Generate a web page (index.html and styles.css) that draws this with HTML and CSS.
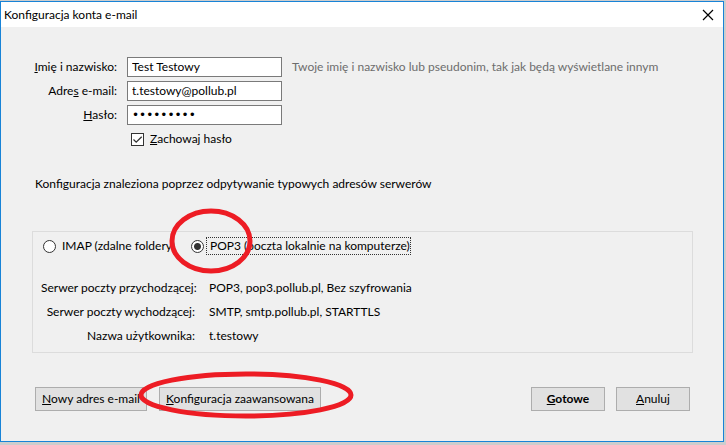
FILE: index.html
```
<!DOCTYPE html>
<html lang="pl">
  <head>
    <meta charset="utf-8">
    <title>Konfiguracja konta e-mail</title>
    <link rel="stylesheet" href="styles.css">
  </head>

  <body>
    <div class="window">
      <header class="titlebar">
        <h1>Konfiguracja konta e-mail</h1>
        <button type="button" class="close" aria-label="Zamknij">
          <svg width="12" height="12" viewBox="0 0 12 12">
            <path d="M1 1L11 11M11 1L1 11" fill="none" stroke="#000" stroke-width="1.2" />
          </svg>
        </button>
      </header>

      <form class="content">
        <div class="account">
          <label for="name"><u>I</u>mię i nazwisko:</label>
          <input type="text" id="name" value="Test Testowy">
          <span class="hint">Twoje imię i nazwisko lub pseudonim, tak jak będą wyświetlane innym</span>

          <label for="email">Adre<u>s</u> e-mail:</label>
          <input type="text" id="email" value="t.testowy@pollub.pl">

          <label for="password"><u>H</u>asło:</label>
          <input type="password" id="password" value="testowy12">

          <div class="remember">
            <input type="checkbox" id="remember" checked>
            <label for="remember"><u>Z</u>achowaj hasło</label>
          </div>
        </div>

        <p class="status">Konfiguracja znaleziona poprzez odpytywanie typowych adresów serwerów</p>

        <section class="result">
          <div class="protocols">
            <div class="option">
              <input type="radio" name="protocol" id="imap">
              <label for="imap">IMAP (zdalne foldery)</label>
            </div>
            <div class="option">
              <input type="radio" name="protocol" id="pop3" checked>
              <label for="pop3" class="focused">POP3 (poczta lokalnie na komputerze)</label>
              <svg class="mark mark-option" width="86" height="68" viewBox="0 0 86 68">
                <ellipse cx="43" cy="34" rx="39" ry="30" />
              </svg>
            </div>
          </div>

          <dl class="servers">
            <dt>Serwer poczty przychodzącej:</dt>
            <dd>POP3, pop3.pollub.pl, Bez szyfrowania</dd>
            <dt>Serwer poczty wychodzącej:</dt>
            <dd>SMTP, smtp.pollub.pl, STARTTLS</dd>
            <dt>Nazwa użytkownika:</dt>
            <dd>t.testowy</dd>
          </dl>
        </section>

        <footer class="actions">
          <button type="button" class="wide"><u>N</u>owy adres e-mail</button>
          <div class="advanced">
            <button type="button" class="wider"><u>K</u>onfiguracja zaawansowana</button>
            <svg class="mark mark-button" width="216" height="48" viewBox="0 0 216 48">
              <ellipse cx="108" cy="24" rx="105" ry="21" />
            </svg>
          </div>
          <div class="confirm">
            <button type="button" class="default"><u>G</u>otowe</button>
            <button type="button"><u>A</u>nuluj</button>
          </div>
        </footer>
      </form>
    </div>
  </body>
</html>
```
FILE: styles.css
```
* {
  box-sizing: border-box;
  margin: 0;
  padding: 0;
}

body {
  background-color: #cdcdcd;
  color: #000;
  font-family: Lato, "Open Sans", sans-serif;
  font-size: 12px;
  line-height: 20px;
  padding: 1px 2px 2px 0;
}

input,
button {
  font: inherit;
  color: inherit;
}

.window {
  background-color: #f0f0f0;
  border: 1px solid #1883d7;
}

/* title bar */
.titlebar {
  align-items: center;
  background-color: #fff;
  display: flex;
  height: 25px;
  justify-content: space-between;
  padding: 0 9px 0 3px;
}

h1 {
  font-size: 12px;
  font-weight: normal;
}

.close {
  background: none;
  border: 0;
  display: flex;
}

.content {
  padding: 30px 30px 30px 31px;
}

/* account fields */
.account {
  display: grid;
  gap: 4px 10px;
  grid-template-columns: 85px 155px 1fr;
  white-space: nowrap;
}

.account > label {
  grid-column: 1;
  text-align: right;
}

.account > input {
  background-color: #fff;
  border: 1px solid #7a7a7a;
  height: 20px;
  padding: 0 4px;
  width: 100%;
}

.account > input[type="password"] {
  font-family: "DejaVu Sans", sans-serif;
}

.hint {
  color: #6d6d6d;
}

.remember,
.option {
  align-items: center;
  display: flex;
  gap: 6px;
}

.remember {
  grid-column: 2;
  padding-left: 4px;
}

input[type="checkbox"],
input[type="radio"] {
  appearance: none;
  background-color: #fff;
  border: 1px solid #333;
  height: 13px;
  width: 13px;
}

input[type="checkbox"]:checked {
  background-image: url("data:image/svg+xml,%3Csvg xmlns='http://www.w3.org/2000/svg' viewBox='0 0 11 11'%3E%3Cpath d='M1.5 5.5L4.2 8.2L9.7 2.7' fill='none' stroke='%23333' stroke-width='1.3'/%3E%3C/svg%3E");
}

input[type="radio"] {
  border-radius: 50%;
}

input[type="radio"]:checked {
  background-image: radial-gradient(circle, #333 3px, #fff 4px);
}

.status {
  margin: 25px 3px 37px;
}

/* detected servers */
.result {
  border: 1px solid #dcdcdc;
  padding: 4px 8px 6px;
  white-space: nowrap;
}

.protocols {
  display: flex;
  margin-bottom: 22px;
}

.option {
  min-width: 148px;
  padding-left: 2px;
  position: relative;
}

.focused {
  line-height: 18px;
  margin-left: -4px;
  outline: 1px dotted #333;
  outline-offset: -1px;
  padding: 0 1px 0 4px;
}

.servers {
  display: grid;
  gap: 4px 14px;
  grid-template-columns: 154px 1fr;
}

.servers dt {
  text-align: right;
}

/* buttons */
.actions {
  display: flex;
  gap: 12px;
  margin-top: 34px;
  padding: 0 3px;
}

.actions button {
  background-color: #e1e1e1;
  border: 1px solid #adadad;
  height: 24px;
  line-height: 20px;
  min-width: 74px;
  white-space: nowrap;
}

.actions .wide {
  min-width: 112px;
}

.actions .wider {
  min-width: 162px;
}

.actions .default {
  font-weight: bold;
}

.advanced {
  margin-right: auto;
  position: relative;
}

.confirm {
  display: flex;
  gap: 11px;
}

/* red rings drawn over the dialog */
.mark {
  fill: none;
  pointer-events: none;
  position: absolute;
  stroke: #ed1c24;
  stroke-width: 5px;
}

.mark-option {
  left: -21px;
  top: -29px;
}

.mark-button {
  left: -21px;
  top: -16px;
}
```
